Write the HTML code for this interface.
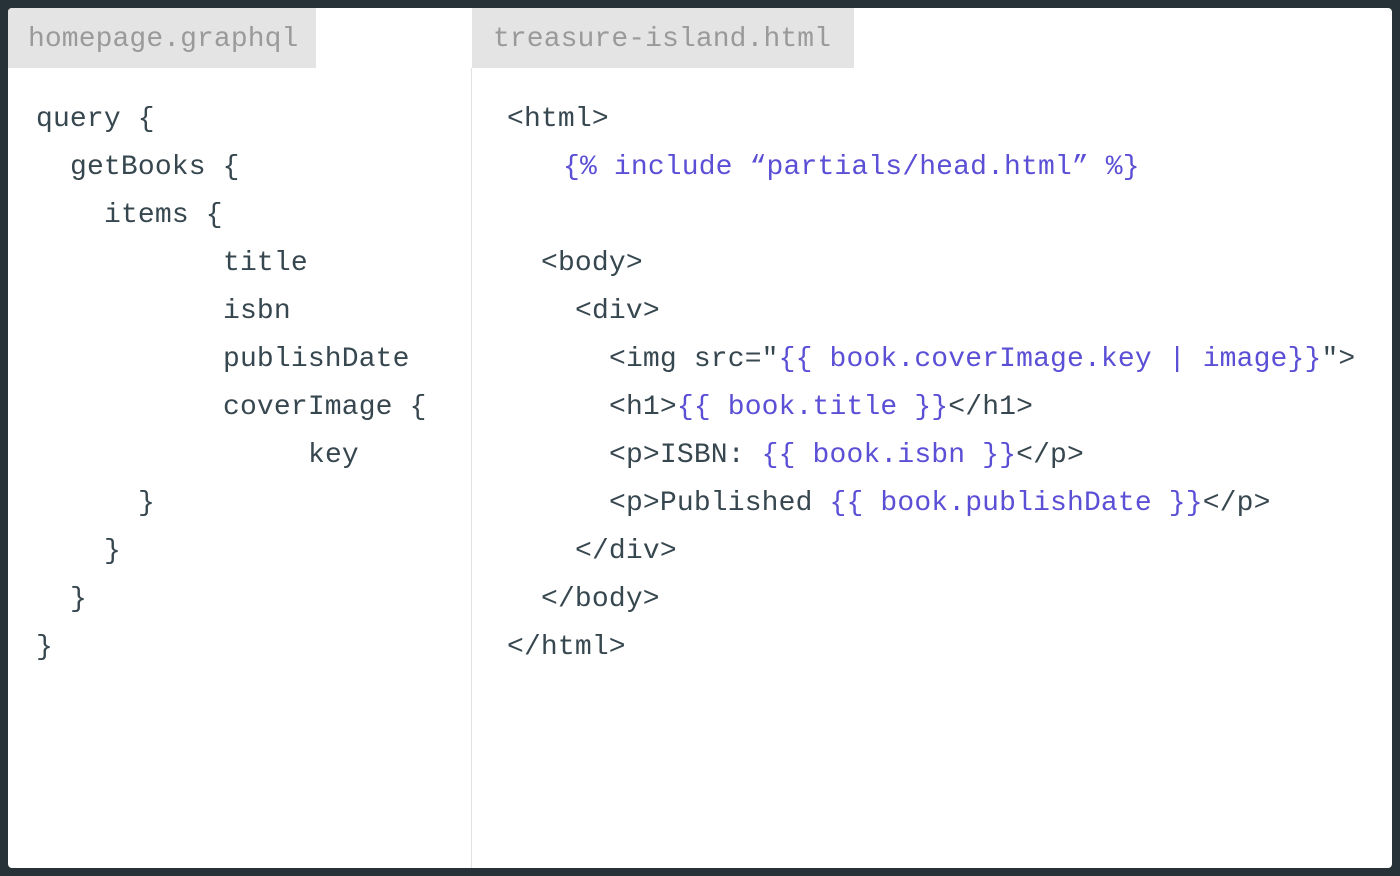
<!DOCTYPE html>
<html><head><meta charset="utf-8"><style>
html,body{margin:0;padding:0;width:1400px;height:876px;overflow:hidden;background:#263238}
.frame{position:absolute;left:8px;top:8px;width:1384px;height:860px;background:#fff;border-radius:4px;overflow:hidden}
.tab{position:absolute;top:0;height:60px;background:#e4e4e4;color:#9a9a9a;font:28px/64px "Liberation Mono",monospace;letter-spacing:0.1px}
.div{position:absolute;left:463px;top:60px;width:1px;height:800px;background:#e2e2e2}
.l{position:absolute;font:28px/48px "Liberation Mono",monospace;color:#37474f;white-space:pre;letter-spacing:0.16px}
.p{color:#5b4fd6}
</style></head><body><div class="frame">
<div class="tab" style="left:0;width:308px;padding-left:20px;box-sizing:border-box">homepage.graphql</div>
<div class="tab" style="left:464px;width:382px;padding-left:21px;box-sizing:border-box">treasure-island.html</div>
<div class="div"></div>
<div class="l" style="left:28px;top:88px">query {</div>
<div class="l" style="left:62px;top:136px">getBooks {</div>
<div class="l" style="left:96px;top:184px">items {</div>
<div class="l" style="left:215px;top:232px">title</div>
<div class="l" style="left:215px;top:280px">isbn</div>
<div class="l" style="left:215px;top:328px">publishDate</div>
<div class="l" style="left:215px;top:376px">coverImage {</div>
<div class="l" style="left:300px;top:424px">key</div>
<div class="l" style="left:130px;top:472px">}</div>
<div class="l" style="left:96px;top:520px">}</div>
<div class="l" style="left:62px;top:568px">}</div>
<div class="l" style="left:28px;top:616px">}</div>

<div class="l" style="left:499px;top:88px">&lt;html&gt;</div>
<div class="l p" style="left:555px;top:136px">{% include “partials/head.html” %}</div>
<div class="l" style="left:533px;top:232px">&lt;body&gt;</div>
<div class="l" style="left:567px;top:280px">&lt;div&gt;</div>
<div class="l" style="left:601px;top:328px">&lt;img src="<span class="p">{{ book.coverImage.key | image}}</span>"&gt;</div>
<div class="l" style="left:601px;top:376px">&lt;h1&gt;<span class="p">{{ book.title }}</span>&lt;/h1&gt;</div>
<div class="l" style="left:601px;top:424px">&lt;p&gt;ISBN: <span class="p">{{ book.isbn }}</span>&lt;/p&gt;</div>
<div class="l" style="left:601px;top:472px">&lt;p&gt;Published <span class="p">{{ book.publishDate }}</span>&lt;/p&gt;</div>
<div class="l" style="left:567px;top:520px">&lt;/div&gt;</div>
<div class="l" style="left:533px;top:568px">&lt;/body&gt;</div>
<div class="l" style="left:499px;top:616px">&lt;/html&gt;</div>
</div></body></html>
